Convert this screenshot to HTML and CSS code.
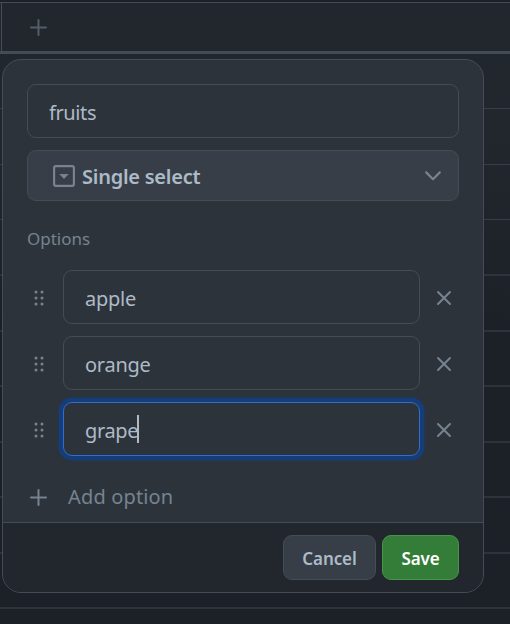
FILE: index.html
```html
<!DOCTYPE html>
<html lang="en">
<head>
<meta charset="utf-8">
<title>Edit field</title>
<link rel="stylesheet" href="styles.css">
</head>
<body>
<div class="table">
  <div class="table-head">
    <svg class="plus" width="17" height="17" viewBox="0 0 17 17"><path d="M8.500 1v15M1 8.500h15"/></svg>
  </div>
  <div class="table-rows">
    <div class="table-row thin"></div><div class="table-row thin"></div><div class="table-row thin"></div><div class="table-row"></div><div class="table-row"></div>
    <div class="table-row"></div><div class="table-row"></div><div class="table-row"></div><div class="table-row"></div><div class="table-row"></div>
  </div>
</div>
<form class="dialog">
  <div class="dialog-body">
    <div class="input name"><span class="t-fruits">fruits</span></div>
    <div class="select">
      <svg class="type-icon" width="22" height="22" viewBox="0 0 22 22"><rect x="1.1" y="1.1" width="19.8" height="19.8" rx="1.8"/><path d="M6.2 9h9.6L11 14z"/></svg>
      <span class="select-label">Single select</span>
      <svg class="chevron" width="18" height="12" viewBox="0 0 18 12"><path d="M2.2 2.4 9 9.2l6.800-6.800"/></svg>
    </div>
    <div class="label"><span>Options</span></div>
    <div class="options">
      <div class="option">
        <svg class="grip" width="12" height="18" viewBox="0 0 12 18"><circle cx="3" cy="3" r="1.500"/><circle cx="9" cy="3" r="1.500"/><circle cx="3" cy="9" r="1.500"/><circle cx="9" cy="9" r="1.500"/><circle cx="3" cy="15" r="1.500"/><circle cx="9" cy="15" r="1.500"/></svg>
        <div class="input"><span class="t-apple">apple</span></div>
        <svg class="remove" width="16" height="16" viewBox="0 0 16 16"><path d="m2 2 12 12M14 2 2 14"/></svg>
      </div>
      <div class="option">
        <svg class="grip" width="12" height="18" viewBox="0 0 12 18"><circle cx="3" cy="3" r="1.500"/><circle cx="9" cy="3" r="1.500"/><circle cx="3" cy="9" r="1.500"/><circle cx="9" cy="9" r="1.500"/><circle cx="3" cy="15" r="1.500"/><circle cx="9" cy="15" r="1.500"/></svg>
        <div class="input"><span class="t-orange">orange</span></div>
        <svg class="remove" width="16" height="16" viewBox="0 0 16 16"><path d="m2 2 12 12M14 2 2 14"/></svg>
      </div>
      <div class="option">
        <svg class="grip" width="12" height="18" viewBox="0 0 12 18"><circle cx="3" cy="3" r="1.500"/><circle cx="9" cy="3" r="1.500"/><circle cx="3" cy="9" r="1.500"/><circle cx="9" cy="9" r="1.500"/><circle cx="3" cy="15" r="1.500"/><circle cx="9" cy="15" r="1.500"/></svg>
        <div class="input focused"><span class="t-grape">grape</span><i class="caret"></i></div>
        <svg class="remove" width="16" height="16" viewBox="0 0 16 16"><path d="m2 2 12 12M14 2 2 14"/></svg>
      </div>
    </div>
    <div class="add">
      <svg class="plus" width="17" height="17" viewBox="0 0 17 17"><path d="M8.500 1v15M1 8.500h15"/></svg>
      <span>Add option</span>
    </div>
  </div>
  <div class="dialog-foot">
    <div class="btn cancel">Cancel</div>
    <div class="btn save">Save</div>
  </div>
</form>
</body>
</html>
```

FILE: styles.css
```css
* { box-sizing: border-box; }
body {
  margin: 0;
  width: 510px;
  height: 624px;
  overflow: hidden;
  position: relative;
  background: #1c2128;
  font-family: "Noto Sans", "Open Sans", sans-serif;
  font-size: 20px;
  line-height: 28px;
  color: #adbac7;
}
svg { display: block; flex: none; fill: none; }
span { white-space: nowrap; }
.table {
  padding-top: 2px;
  height: 624px;
  background: linear-gradient(#1c2128 2px, #22272e 2px, #22272e 130px, #1c2128 330px);
}
.table-head {
  height: 52px;
  border-top: 1px solid #444c56;
  border-bottom: 3px solid #444c56;
  padding: 16px 0 0 30px;
  background: linear-gradient(#444c56, #444c56) 1px 0 / 1px 100% no-repeat;
}
.table-head .plus { stroke: #545d68; }
.table-rows {
  display: grid;
  grid-template-rows: 55px 56px 55px 56px 56px 55px 56px 55px 56px 55px;
}
.table-row { border-bottom: 2px solid #2d333b; }
.table-row.thin { border-bottom: 1px solid #373e47; }
.plus { stroke: #768390; stroke-width: 2; stroke-linecap: round; }
.dialog {
  position: absolute;
  left: 2px;
  top: 59px;
  width: 482px;
  height: 534px;
  display: flex;
  flex-direction: column;
  border: 1px solid #444c56;
  border-radius: 19px;
  background: #2d333b;
  overflow: hidden;
}
.dialog-body { flex: 1; padding: 24px 24px 0; }
.input {
  height: 54px;
  flex: 1;
  display: flex;
  align-items: center;
  padding: 4px 21px 0;
  border: 1px solid #444c56;
  border-radius: 9px;
}
.t-fruits { letter-spacing: -0.4px; }
.t-apple, .t-orange { letter-spacing: -0.25px; }
.t-grape { letter-spacing: -0.35px; }
.name { margin-bottom: 12px; }
.select {
  height: 51px;
  display: flex;
  align-items: center;
  padding: 1px 16px 0 25px;
  border: 1px solid #444c56;
  border-radius: 9px;
  background: #373e47;
}
.type-icon { margin-right: 7px; stroke: #768390; stroke-width: 2.200; }
.type-icon path { fill: #768390; stroke: none; }
.select-label { flex: 1; padding-top: 2px; font-weight: 600; letter-spacing: -0.25px; }
.chevron { stroke: #768390; stroke-width: 2.200; stroke-linecap: round; stroke-linejoin: round; }
.label { height: 69px; padding-top: 24px; font-size: 17px; color: #768390; }
.options { display: grid; gap: 12px; }
.option { display: flex; align-items: center; }
.grip { margin: 2px 18px 0 6px; fill: #768390; }
.remove { margin: 2px 7px 0 16px; stroke: #768390; stroke-width: 2; stroke-linecap: round; }
.focused { border-color: #316dca; box-shadow: 0 0 0 4.500px #143d79; }
.caret { width: 2px; height: 28px; margin: -4px 0 0 -1px; background: #adbac7; }
.add { display: flex; align-items: center; height: 28px; margin-top: 27px; padding-left: 3px; color: #768390; }
.add span { margin-left: 21px; letter-spacing: 0.15px; }
.dialog-foot {
  height: 70px;
  display: flex;
  gap: 6px;
  justify-content: flex-end;
  padding: 12px 24px;
  border-top: 1px solid #444c56;
  background: #22272e;
}
.btn {
  height: 45px;
  display: flex;
  align-items: center;
  justify-content: center;
  padding-top: 2px;
  border: 1px solid #444c56;
  border-radius: 9px;
  font-size: 17px;
  font-weight: 600;
  letter-spacing: -0.1px;
}
.cancel { width: 93px; background: #373e47; }
.save { width: 77px; background: #347d39; border-color: #46954a; color: #fff; }
```
